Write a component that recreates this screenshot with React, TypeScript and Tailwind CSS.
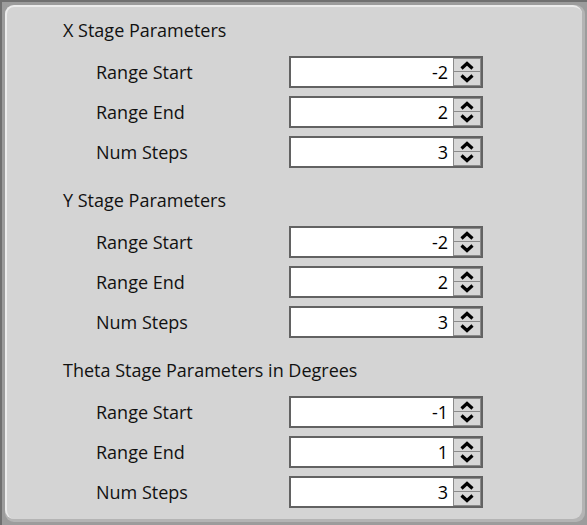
type Row = { label: string; value: string };
type Section = { title: string; rows: Row[] };

const sections: Section[] = [
  {
    title: "X Stage Parameters",
    rows: [
      { label: "Range Start", value: "-2" },
      { label: "Range End", value: "2" },
      { label: "Num Steps", value: "3" },
    ],
  },
  {
    title: "Y Stage Parameters",
    rows: [
      { label: "Range Start", value: "-2" },
      { label: "Range End", value: "2" },
      { label: "Num Steps", value: "3" },
    ],
  },
  {
    title: "Theta Stage Parameters in Degrees",
    rows: [
      { label: "Range Start", value: "-1" },
      { label: "Range End", value: "1" },
      { label: "Num Steps", value: "3" },
    ],
  },
];

function Chevron({ up }: { up?: boolean }) {
  return (
    <svg width="14" height="9" viewBox="0 0 14 9">
      <path
        d={up ? "M1.5 7.5 L7 2.5 L12.5 7.5" : "M1.5 1.5 L7 6.5 L12.5 1.5"}
        fill="none"
        stroke="#000"
        strokeWidth="3.2"
      />
    </svg>
  );
}

function NumberBox({ value }: { value: string }) {
  return (
    <div className="flex h-[32px] w-[194px] border-2 border-[#626262] bg-white">
      <div className="flex flex-1 items-center justify-end pr-[5px] text-[18px] text-black">{value}</div>
      <div className="flex w-[28px] flex-col bg-[#d4d4d4]">
        <div className="flex h-[14px] items-center justify-center border border-[#8a8a8a] bg-[#d8d8d8]">
          <Chevron up />
        </div>
        <div className="flex h-[14px] items-center justify-center border border-t-0 border-[#8a8a8a] bg-[#d8d8d8]">
          <Chevron />
        </div>
      </div>
    </div>
  );
}

export default function App() {
  return (
    <div
      className="h-[525px] w-[587px] border-l-2 border-t-2 border-[#707070] bg-[#9c9c9c] pb-[3px] pl-[3px] pr-[2px] pt-[3px]"
      style={{ fontFamily: '"Open Sans", "Noto Sans", sans-serif' }}
    >
      <div className="h-full w-full rounded-[9px] bg-[#b4b4b4] pb-[3px] pr-[3px]">
        <div className="h-full w-full rounded-[9px] border-l-2 border-t-2 border-[#ececec] bg-[#d4d4d4] pl-[56px] pt-[11px]">
          <div className="flex flex-col gap-[20px]">
            {sections.map((section) => (
              <div key={section.title} className="flex flex-col gap-[14px]">
                <h2 className="flex h-[24px] items-center text-[18px] text-[#111]">{section.title}</h2>
                <div className="flex flex-col gap-[8px]">
                  {section.rows.map((row) => (
                    <div key={row.label} className="flex h-[32px] items-center">
                      <span className="w-[226px] pl-[33px] text-[18px] text-[#111]">{row.label}</span>
                      <NumberBox value={row.value} />
                    </div>
                  ))}
                </div>
              </div>
            ))}
          </div>
        </div>
      </div>
    </div>
  );
}
